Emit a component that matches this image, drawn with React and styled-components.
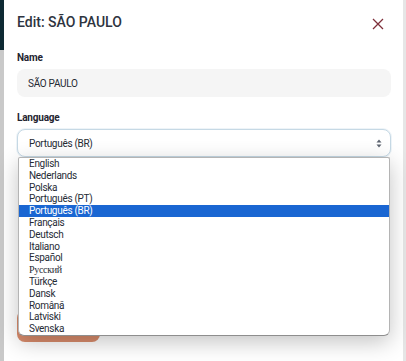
import React from "react";
import styled, { createGlobalStyle } from "styled-components";

const Global = createGlobalStyle`
    html, body {
        margin: 0;
        padding: 0;
        background: #ececec;
    }
    body {
        font-family: Roboto, "Liberation Sans", sans-serif;
        color: #2c313c;
    }
`;

const Page = styled.div`
    display: flex;
    width: 406px;
    height: 361px;
    overflow: hidden;
`;

const Backdrop = styled.div`
    width: 4px;
    display: flex;
    flex-direction: column;
    background: #c9c9c9;

    .top{
        height: 50px;
        background: #0e2a33;
    };
`;

const Modal = styled.div`
    flex: 1;
    background: #ffffff;
    padding: 12px 12px 0 13px;
    display: flex;
    flex-direction: column;
`;

const EdgeStrip = styled.div`
    width: 3px;
    background: #e6e6e6;
`;

const Header = styled.div`
    display: flex;
    justify-content: space-between;
    align-items: center;
    height: 20px;

    h2{
        margin: 0;
        font-size: 14px;
        font-weight: 500;
        line-height: 20px;
        color: #2e3440;
    };
`;

const Close = styled.button`
    border: none;
    background: none;
    padding: 0;
    margin: 4px 7px 0 0;
    width: 12px;
    height: 12px;
    display: flex;
    cursor: pointer;
`;

const Label = styled.div`
    margin-top: ${(p) => p.$top}px;
    font-size: 10px;
    font-weight: 700;
    line-height: 14px;
    letter-spacing: -0.2px;
    color: #1f2430;
`;

const Field = styled.div`
    position: relative;
    margin-top: 4px;
    height: 28px;
    border-radius: 8px;
    box-sizing: border-box;
    display: flex;
    align-items: center;
    padding: 0 10px 0 11px;
    font-size: 10px;
    letter-spacing: -0.3px;
    color: #252a33;
    background: ${(p) => (p.$filled ? "#f5f5f5" : "#ffffff")};
    border: ${(p) => (p.$focus ? "1.5px solid #c6d9e5" : "none")};
    box-shadow: ${(p) => (p.$focus ? "0 0 0 1px #eef4f8" : "none")};
    justify-content: space-between;
`;

const Arrows = styled.svg`
    width: 6px;
    height: 9px;
    margin-right: -2px;
`;

const List = styled.ul`
    position: absolute;
    left: 0px;
    right: 0px;
    top: 27px;
    margin: 0;
    padding: 0;
    list-style: none;
    background: #ffffff;
    border: 1px solid #b4b4b4;
    border-bottom-color: #8e8e8e;
    border-radius: 2px 2px 6px 6px;
    box-shadow: 0 6px 22px rgba(0, 0, 0, 0.24);
    z-index: 2;
`;

const Option = styled.li`
    height: 11.8px;
    line-height: 11.8px;
    padding-left: 10px;
    font-size: 10px;
    font-family: ${(p) => (p.$serif ? '"Liberation Serif", serif' : "inherit")};
    color: ${(p) => (p.$active ? "#ffffff" : "#262b35")};
    background: ${(p) => (p.$active ? "#1a66d2" : "transparent")};
`;

const Save = styled.div`
    margin-top: 153px;
    width: 83px;
    height: 32px;
    border-radius: 8px;
    background: #d98c6c;
`;

const languages = [
    "English",
    "Nederlands",
    "Polska",
    "Português (PT)",
    "Português (BR)",
    "Français",
    "Deutsch",
    "Italiano",
    "Español",
    "Русский",
    "Türkçe",
    "Dansk",
    "Română",
    "Latviski",
    "Svenska",
];

const App = () => {
    const selected = "Português (BR)";

    return (
        <>
            <Global />
            <Page>
                <Backdrop>
                    <div className="top" />
                </Backdrop>
                <Modal>
                    <Header>
                        <h2>Edit: SÃO PAULO</h2>
                        <Close aria-label="close">
                            <svg width="12" height="12" viewBox="0 0 12 12">
                                <path d="M1 1 L11 11 M11 1 L1 11" stroke="#7e2f3a" strokeWidth="1.25" />
                            </svg>
                        </Close>
                    </Header>

                    <Label $top={19}>Name</Label>
                    <Field $filled>SÃO PAULO</Field>

                    <Label $top={14}>Language</Label>
                    <Field $focus>
                        {selected}
                        <Arrows viewBox="0 0 6 9">
                            <path d="M3 0.5 L5.5 3.5 L0.5 3.5 Z M3 8.5 L5.5 5.5 L0.5 5.5 Z" fill="#5d6470" />
                        </Arrows>
                        <List>
                            {languages.map((l) => (
                                <Option key={l} $active={l === selected} $serif={l === "Русский"}>
                                    {l}
                                </Option>
                            ))}
                        </List>
                    </Field>

                    <Save />
                </Modal>
                <EdgeStrip />
            </Page>
        </>
    );
};

export default App;
